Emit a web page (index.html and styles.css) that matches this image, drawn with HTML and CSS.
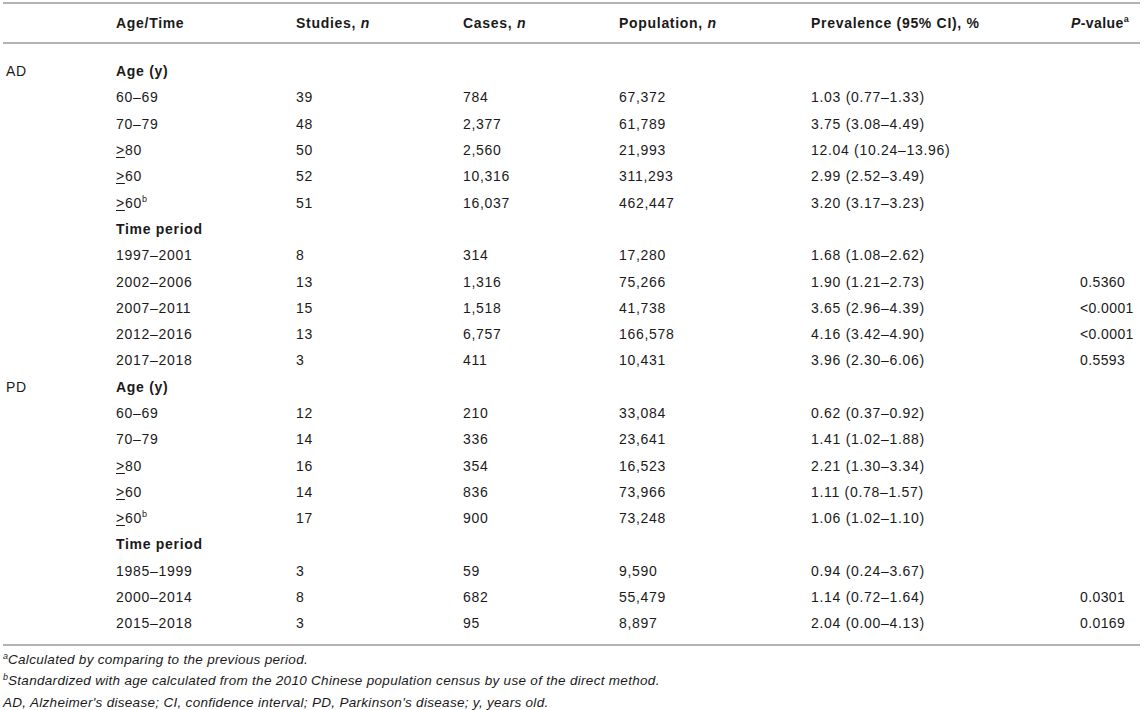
FILE: index.html
```html
<!DOCTYPE html>
<html>
<head>
<meta charset="utf-8">
<link rel="stylesheet" href="styles.css">
</head>
<body>
<div class="page">
<table class="tbl">
<colgroup>
<col class="c0"><col class="c1"><col class="c2"><col class="c3"><col class="c4"><col class="c5"><col class="c6">
</colgroup>
<thead>
<tr><th></th><th>Age/Time</th><th>Studies, <i>n</i></th><th>Cases, <i>n</i></th><th>Population, <i>n</i></th><th>Prevalence (95% CI), %</th><th class="pv"><i>P</i>-value<sup>a</sup></th></tr>
</thead>
<tbody>
<tr class="first"><td>AD</td><td class="b">Age (y)</td><td></td><td></td><td></td><td></td><td></td></tr>
<tr><td></td><td>60–69</td><td>39</td><td>784</td><td>67,372</td><td>1.03 (0.77–1.33)</td><td class="p"></td></tr>
<tr><td></td><td>70–79</td><td>48</td><td>2,377</td><td>61,789</td><td>3.75 (3.08–4.49)</td><td class="p"></td></tr>
<tr><td></td><td><span class="ge">&gt;</span>80</td><td>50</td><td>2,560</td><td>21,993</td><td>12.04 (10.24–13.96)</td><td class="p"></td></tr>
<tr><td></td><td><span class="ge">&gt;</span>60</td><td>52</td><td>10,316</td><td>311,293</td><td>2.99 (2.52–3.49)</td><td class="p"></td></tr>
<tr><td></td><td><span class="ge">&gt;</span>60<sup>b</sup></td><td>51</td><td>16,037</td><td>462,447</td><td>3.20 (3.17–3.23)</td><td class="p"></td></tr>
<tr><td></td><td class="b">Time period</td><td></td><td></td><td></td><td></td><td></td></tr>
<tr><td></td><td>1997–2001</td><td>8</td><td>314</td><td>17,280</td><td>1.68 (1.08–2.62)</td><td class="p"></td></tr>
<tr><td></td><td>2002–2006</td><td>13</td><td>1,316</td><td>75,266</td><td>1.90 (1.21–2.73)</td><td class="p">0.5360</td></tr>
<tr><td></td><td>2007–2011</td><td>15</td><td>1,518</td><td>41,738</td><td>3.65 (2.96–4.39)</td><td class="p">&lt;0.0001</td></tr>
<tr><td></td><td>2012–2016</td><td>13</td><td>6,757</td><td>166,578</td><td>4.16 (3.42–4.90)</td><td class="p">&lt;0.0001</td></tr>
<tr><td></td><td>2017–2018</td><td>3</td><td>411</td><td>10,431</td><td>3.96 (2.30–6.06)</td><td class="p">0.5593</td></tr>
<tr><td>PD</td><td class="b">Age (y)</td><td></td><td></td><td></td><td></td><td></td></tr>
<tr><td></td><td>60–69</td><td>12</td><td>210</td><td>33,084</td><td>0.62 (0.37–0.92)</td><td class="p"></td></tr>
<tr><td></td><td>70–79</td><td>14</td><td>336</td><td>23,641</td><td>1.41 (1.02–1.88)</td><td class="p"></td></tr>
<tr><td></td><td><span class="ge">&gt;</span>80</td><td>16</td><td>354</td><td>16,523</td><td>2.21 (1.30–3.34)</td><td class="p"></td></tr>
<tr><td></td><td><span class="ge">&gt;</span>60</td><td>14</td><td>836</td><td>73,966</td><td>1.11 (0.78–1.57)</td><td class="p"></td></tr>
<tr><td></td><td><span class="ge">&gt;</span>60<sup>b</sup></td><td>17</td><td>900</td><td>73,248</td><td>1.06 (1.02–1.10)</td><td class="p"></td></tr>
<tr><td></td><td class="b">Time period</td><td></td><td></td><td></td><td></td><td></td></tr>
<tr><td></td><td>1985–1999</td><td>3</td><td>59</td><td>9,590</td><td>0.94 (0.24–3.67)</td><td class="p"></td></tr>
<tr><td></td><td>2000–2014</td><td>8</td><td>682</td><td>55,479</td><td>1.14 (0.72–1.64)</td><td class="p">0.0301</td></tr>
<tr class="last"><td></td><td>2015–2018</td><td>3</td><td>95</td><td>8,897</td><td>2.04 (0.00–4.13)</td><td class="p">0.0169</td></tr>
</tbody>
</table>
<div class="notes">
<p><sup>a</sup>Calculated by comparing to the previous period.</p>
<p><sup>b</sup>Standardized with age calculated from the 2010 Chinese population census by use of the direct method.</p>
<p>AD, Alzheimer's disease; CI, confidence interval; PD, Parkinson's disease; y, years old.</p>
</div>
</div>
</body>
</html>
```
FILE: styles.css
```css
html, body {
  margin: 0;
  padding: 0;
  background: #ffffff;
}
body {
  font-family: "Liberation Sans", Arial, sans-serif;
  color: #1a1a1a;
}
.page {
  padding: 2px 4px 0 3px;
}
.tbl {
  width: 1137px;
  border-collapse: collapse;
  table-layout: fixed;
  font-size: 14px;
  letter-spacing: 0.7px;
}
.c0 { width: 110px; }
.c1 { width: 180px; }
.c2 { width: 167px; }
.c3 { width: 156px; }
.c4 { width: 192px; }
.c5 { width: 260px; }
.c6 { width: 72px; }
.tbl th {
  text-align: left;
  font-weight: bold;
  padding: 0 0 0 3px;
  height: 38px;
  border-top: 2px solid #b3b3b3;
  border-bottom: 2px solid #b3b3b3;
  white-space: nowrap;
}
.tbl th.pv {
  letter-spacing: 0.4px;
}
.tbl td {
  padding: 0 0 0 3px;
  height: 26.3px;
  white-space: nowrap;
}
.tbl tr.first td {
  padding-top: 14px;
}
.tbl tr.last td {
  padding-bottom: 7px;
  border-bottom: 2px solid #b3b3b3;
}
.tbl td.b {
  font-weight: bold;
}
.tbl td.p {
  padding-left: 12px;
  letter-spacing: 0.4px;
}
.tbl sup {
  font-size: 9px;
  line-height: 0;
  vertical-align: 6px;
  letter-spacing: 0;
}
.ge {
  text-decoration: underline;
  text-underline-offset: 2px;
}
.notes {
  font-size: 13.5px;
  font-style: italic;
  letter-spacing: 0.3px;
  padding-top: 3px;
}
.notes p {
  margin: 0;
  line-height: 21.5px;
}
.notes sup {
  font-size: 9px;
  line-height: 0;
  vertical-align: 5px;
  letter-spacing: 0;
}
```
